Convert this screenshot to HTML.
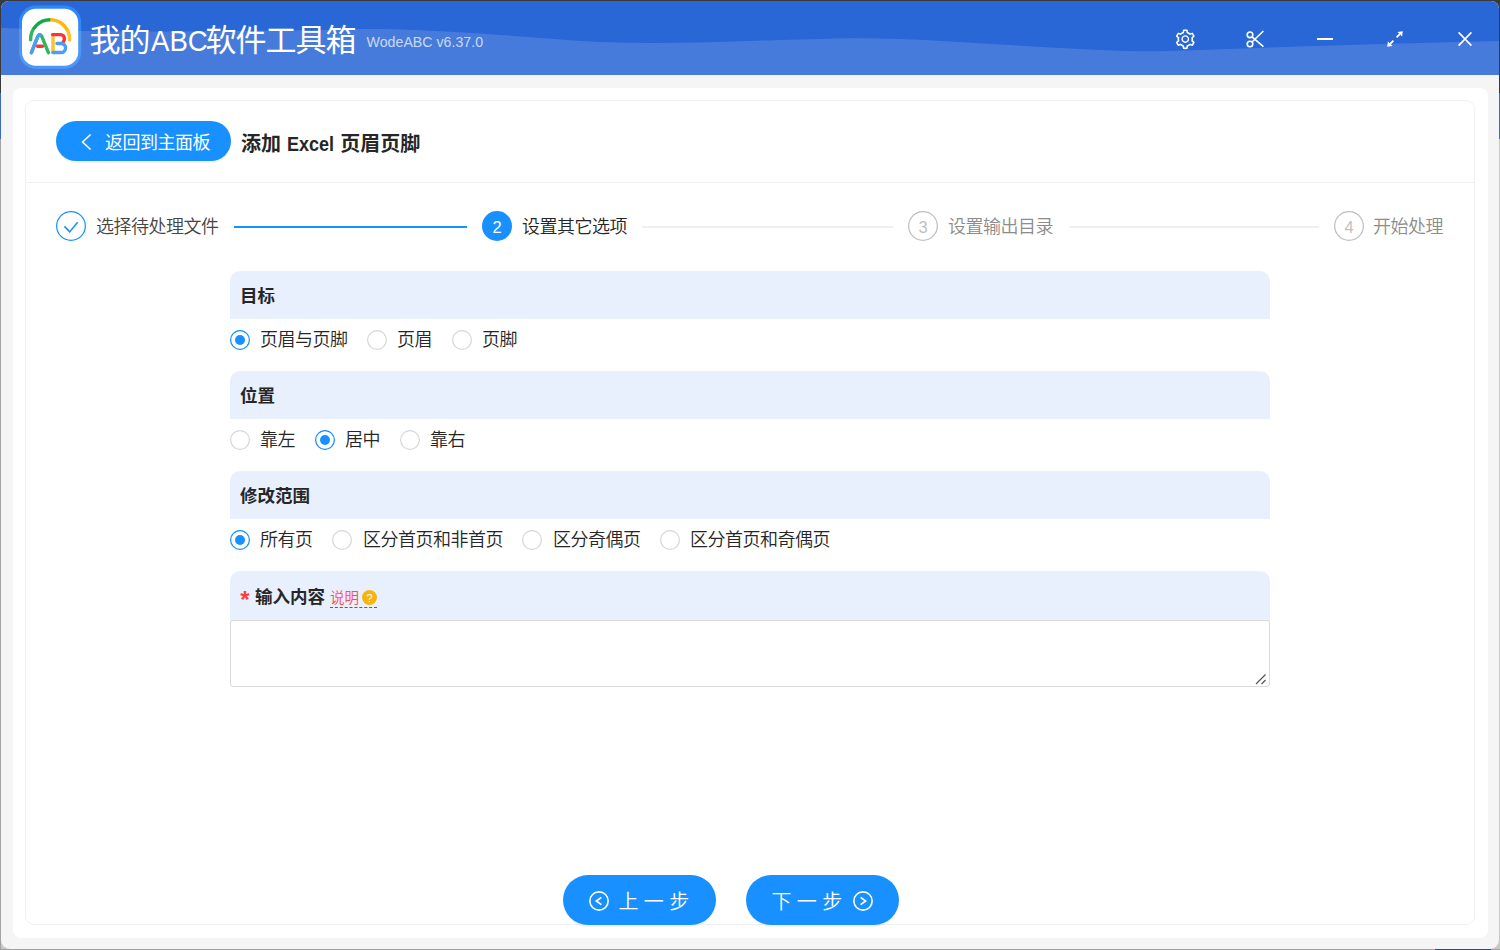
<!DOCTYPE html>
<html lang="zh-CN">
<head>
<meta charset="utf-8">
<title>我的ABC软件工具箱</title>
<style>
*{box-sizing:border-box;margin:0;padding:0}
html,body{width:1500px;height:950px;overflow:hidden}
html{background:#3b3b3b}
body{background:linear-gradient(to bottom,#3a3a3a 0,#3a3a3a 93px,#3d68c4 93px,#3d68c4 139px,#c8c8c8 139px,#c8c8c8 949px,#a0a0a0 949px)}
body{font-family:"Liberation Sans","Noto Sans CJK SC",sans-serif;color:#262626;position:relative;font-weight:350}
.abs{position:absolute}
#win{position:absolute;left:1px;top:1px;width:1498px;height:948px;background:#f5f5f5;border-radius:8px 8px 9px 9px;overflow:hidden}
/* everything inside #stage uses screenshot coordinates */
#stage{position:absolute;left:-1px;top:-1px;width:1500px;height:950px}
#hdr{position:absolute;left:0;top:0;width:1500px;height:74.8px;background:#2966d6}
#wave{position:absolute;left:0;top:0;width:1500px;height:75px}
#apptitle{position:absolute;left:89.5px;top:18.8px;height:44px;line-height:44px;font-size:31px;letter-spacing:-1px;font-weight:400;color:#fff;white-space:nowrap}
#ver{position:absolute;left:366.6px;top:31.6px;height:20px;line-height:20px;font-size:14.2px;color:rgba(255,255,255,.72);white-space:nowrap}
#panel{position:absolute;left:13px;top:88px;width:1475px;height:850px;background:#fff;border-radius:8px}
#card{position:absolute;left:25px;top:100px;width:1450px;height:825px;border:1px solid #f0f0f0;border-radius:9px;background:#fff}
#divider{position:absolute;left:26px;top:182px;width:1448px;height:1px;background:#f0f0f0}
#back{position:absolute;left:56px;top:121px;width:175px;height:40px;border-radius:20px;background:#1890ff;box-shadow:0 2px 0 rgba(0,0,0,.045);color:#fff;font-size:18px;font-weight:400;letter-spacing:-.5px;line-height:44.5px;white-space:nowrap}
#back span{position:absolute;left:49px;top:0}
#ptitle{position:absolute;left:241px;top:124.2px;height:40px;line-height:40px;font-size:20px;font-weight:bold;color:#262626;white-space:nowrap}
.step-ic{position:absolute;top:211px;width:30px;height:30px;border-radius:50%;text-align:center;font-size:16.5px;line-height:33.4px}
.step-ic svg.ring{position:absolute;left:0;top:0}
.step-t{position:absolute;top:212px;height:30px;line-height:30px;font-size:18px;letter-spacing:-.5px;white-space:nowrap}
.step-l{position:absolute;top:226px;height:2px}
.sec{position:absolute;left:230px;width:1040px;height:48px;background:#e8effd;border-radius:10px 10px 0 0}
.sec b{position:absolute;left:10px;top:0;height:48px;line-height:50px;font-size:17.5px;font-weight:bold;color:#262626;white-space:nowrap}
.rl{position:absolute;height:28px;line-height:28px;font-size:18px;letter-spacing:-.5px;color:#262626;white-space:nowrap}
#ta{position:absolute;left:230px;top:620px;width:1040px;height:67px;border:1px solid #d9d9d9;border-radius:3px;background:#fff;resize:none;outline:none;overflow:hidden;display:block;font:inherit;padding:5px 14px}
.bbtn{position:absolute;top:875px;width:153px;height:50px;border-radius:25px;background:#1890ff;box-shadow:0 2px 0 rgba(0,0,0,.045);color:#fff;font-size:20px;line-height:50px;white-space:nowrap}
</style>
</head>
<body>
<div class="abs" style="left:1435px;top:949px;width:56px;height:1px;background:#1f4e96"></div>
<div class="abs" style="left:0;top:139px;width:1px;height:811px;background:#a3a3a3"></div>
<div id="win"><div id="stage">

<!-- ===== title bar ===== -->
<div id="hdr"></div>
<svg class="abs" style="left:15px;top:2px" width="70" height="70" viewBox="15 2 70 70">
<rect x="19" y="5.6" width="62.2" height="63.2" rx="16.6" fill="#2f88f8"/>
<rect x="22" y="8.8" width="56.2" height="57" rx="13.8" fill="#fff"/>
<g fill="none" stroke-width="3.45" stroke-linecap="round" stroke-linejoin="round">
<path d="M30.6 39.8 A19.5 19.5 0 0 1 50.2 19.8" stroke="#0cab47"/>
<path d="M50.2 19.8 A19.5 19.5 0 0 1 69.6 39.8" stroke="#fdb80d" stroke-linecap="butt"/>
<path d="M69.6 39.8 v.1" stroke="#fdb80d"/>
<path d="M31.4 52.6 L37.2 37.8 Q39.8 31.6 42.4 37.8 L48.4 52.6" stroke="#0cab47"/>
<path d="M31.4 52.6 L37.2 37.8 Q38.4 34.9 39.6 34.7" stroke="#2f8df7"/>
<path d="M37.6 46.2 H42.4" stroke="#fb1212"/>
<path d="M53 35.6 V51.6" stroke="#fdb80d" stroke-linecap="butt"/>
<path d="M52.6 34.6 H60.6 A3.9 3.9 0 0 1 64.4 38.4 Q64.4 40.4 63.2 41.8" stroke="#fb1212"/>
<path d="M57 43.4 H61 A4.55 4.55 0 0 1 61 52.5 H52.8" stroke="#2f8df7"/>
</g></svg>

<div id="apptitle">我的<span style="display:inline-block;font-size:30px;letter-spacing:0;transform:scaleX(.92);transform-origin:0 50%;margin-left:1.5px;margin-right:-7.3px">ABC</span>软件工具箱</div>
<div id="ver">WodeABC v6.37.0</div>
<svg class="abs" style="left:1173.7px;top:27.7px" width="22.6" height="22.6" viewBox="0 0 1024 1024" fill="#fff"><path d="M924.8 625.7l-65.5-56c3.1-19 4.7-38.400 4.700-57.800s-1.600-38.800-4.700-57.800l65.500-56a32.030 32.030 0 0 0 9.300-35.200l-.9-2.600a442.400 442.400 0 0 0-79.700-137.900l-1.800-2.100a32.120 32.120 0 0 0-35.100-9.500l-81.300 28.900c-30-24.600-63.500-44-99.700-57.600l-15.700-85a32.050 32.050 0 0 0-25.800-25.700l-2.700-.5c-52.100-9.400-106.900-9.400-159 0l-2.700.5a32.050 32.050 0 0 0-25.800 25.700l-15.800 85.400a351.860 351.860 0 0 0-99 57.400l-81.900-29.100a32 32 0 0 0-35.100 9.500l-1.800 2.100a446.020 446.020 0 0 0-79.700 137.900l-.9 2.600c-4.500 12.500-.8 26.500 9.300 35.200l66.300 56.600c-3.100 18.800-4.600 38-4.600 57.100 0 19.200 1.500 38.400 4.600 57.100L99 625.500a32.030 32.030 0 0 0-9.300 35.200l.9 2.600c18.100 50.400 44.900 96.900 79.700 137.900l1.800 2.100a32.120 32.120 0 0 0 35.100 9.500l81.900-29.100c29.800 24.500 63.100 43.900 99 57.400l15.800 85.400a32.050 32.050 0 0 0 25.800 25.700l2.700.5a449.400 449.400 0 0 0 159 0l2.700-.5a32.050 32.050 0 0 0 25.800-25.700l15.700-85a350 350 0 0 0 99.700-57.600l81.300 28.900a32 32 0 0 0 35.100-9.500l1.800-2.100c34.800-41.100 61.600-87.500 79.700-137.900l.9-2.600c4.500-12.300.8-26.300-9.300-35zM788.300 465.900c2.500 15.100 3.800 30.600 3.800 46.100s-1.300 31-3.800 46.100l-6.600 40.100 74.700 63.900a370.030 370.030 0 0 1-42.600 73.600L721 702.800l-31.400 25.800c-23.900 19.600-50.500 35-79.300 45.800l-38.100 14.300-17.900 97a377.500 377.500 0 0 1-85 0l-17.900-97.200-37.800-14.500c-28.500-10.800-55-26.200-78.700-45.700l-31.400-25.900-93.400 33.200c-17-22.900-31.200-47.600-42.600-73.600l75.500-64.500-6.500-40c-2.400-14.900-3.700-30.300-3.700-45.500 0-15.300 1.200-30.600 3.700-45.500l6.500-40-75.500-64.500c11.300-26.100 25.600-50.700 42.600-73.600l93.400 33.200 31.400-25.900c23.700-19.500 50.200-34.900 78.700-45.700l37.900-14.300 17.900-97.200c28.100-3.200 56.800-3.200 85 0l17.900 97 38.100 14.300c28.700 10.800 55.400 26.200 79.300 45.800l31.400 25.800 92.800-32.900c17 22.900 31.200 47.600 42.600 73.600L781.800 426l6.500 39.900zM512 326c-97.200 0-176 78.800-176 176s78.800 176 176 176 176-78.800 176-176-78.800-176-176-176zm79.200 255.200A111.600 111.600 0 0 1 512 614c-29.900 0-58-11.700-79.200-32.800A111.600 111.600 0 0 1 400 502c0-29.900 11.700-58 32.800-79.200C454 401.600 482.100 390 512 390c29.900 0 58 11.600 79.200 32.800A111.600 111.600 0 0 1 624 502c0 29.900-11.700 58-32.800 79.200z"/></svg>
<svg class="abs" style="left:1244px;top:28px" width="22" height="22" viewBox="0 0 22 22" fill="none" stroke="#fff" stroke-width="1.6"><circle cx="6" cy="6.8" r="2.8"/><circle cx="6" cy="16" r="2.8"/><path d="M8 8.8 L19.4 18.6 M8 14 L19.4 3"/></svg>
<div class="abs" style="left:1317px;top:38px;width:16px;height:2px;background:#fff"></div>
<svg class="abs" style="left:1385px;top:29px" width="20" height="20" viewBox="0 0 20 20"><path d="M5.2 14.8 L8.4 11.6 M11.6 8.4 L14.8 5.2" stroke="#fff" stroke-width="1.9" fill="none"/><path d="M2.2 17.8 L2.9 12.5 L7.5 17.1 Z M17.8 2.2 L17.1 7.5 L12.5 2.9 Z" fill="#fff"/></svg>
<svg class="abs" style="left:1456px;top:30px" width="18" height="18" viewBox="0 0 18 18"><path d="M2.6 2.4 L15.4 15.6 M15.4 2.4 L2.6 15.6" stroke="#fff" stroke-width="1.6" fill="none"/></svg>

<svg id="wave" viewBox="0 0 1500 75"><path fill="#fff" fill-opacity=".14" d="M0 27.6 C6.7 27.90 13.3 28.21 20 28.5 C30.0 28.94 40.0 29.43 50 29.8 C61.7 30.23 73.3 30.70 85 30.9 C106.7 31.27 128.3 31.42 150 31.5 C166.7 31.56 183.3 31.43 200 31.3 C233.3 31.03 266.7 30.72 300 30.3 C316.7 30.09 333.3 29.64 350 29.4 C361.7 29.24 373.3 28.97 385 29.1 C396.7 29.23 408.3 29.72 420 30.2 C433.3 30.75 446.7 31.40 460 32.2 C473.3 33.00 486.7 34.03 500 35 C513.3 35.97 526.7 37.01 540 38 C550.0 38.74 560.0 39.53 570 40.2 C580.0 40.87 590.0 41.65 600 42 C616.7 42.58 633.3 42.92 650 43 C666.7 43.08 683.3 42.83 700 42.5 C716.7 42.17 733.3 41.50 750 41 C766.7 40.50 783.3 39.97 800 39.5 C816.7 39.03 833.3 38.28 850 38.2 C866.7 38.12 883.3 38.45 900 39 C916.7 39.55 933.3 40.58 950 41.5 C966.7 42.42 983.3 43.50 1000 44.5 C1016.7 45.50 1033.3 46.58 1050 47.5 C1066.7 48.42 1083.3 49.37 1100 50 C1116.7 50.63 1133.3 51.30 1150 51.3 C1166.7 51.30 1183.3 50.53 1200 50 C1233.3 48.93 1266.7 47.57 1300 46.5 C1333.3 45.43 1366.7 44.52 1400 43.6 C1433.3 42.68 1466.7 41.87 1500 41 L1500 75 L0 75 Z"/></svg>

<!-- ===== content ===== -->
<div id="panel"></div>
<div id="card"></div>
<div id="divider"></div>

<div id="back"><svg class="abs" style="left:24px;top:12px" width="12" height="18" viewBox="0 0 12 18"><path d="M10.6 1.5 L2.6 9 L10.6 16.5" fill="none" stroke="#fff" stroke-width="1.6"/></svg><span>返回到主面板</span></div>
<div id="ptitle">添加 <span style="display:inline-block;transform:scaleX(.9);transform-origin:0 50%;margin-left:.6px;margin-right:-4.8px">Excel</span> 页眉页脚</div>

<!-- steps -->
<div class="step-ic" style="left:56px"><svg class="ring" width="30" height="30" viewBox="0 0 30 30"><circle cx="15" cy="15" r="14.35" fill="none" stroke="#1890ff" stroke-width="1.25"/></svg><svg class="abs" style="left:7px;top:8px" width="17" height="15" viewBox="0 0 17 15"><path d="M1.4 7.4 L6.7 12.9 L14.6 3.3" fill="none" stroke="#1890ff" stroke-width="1.6"/></svg></div>
<div class="step-t" style="left:96px;color:#454545">选择待处理文件</div>
<div class="step-l" style="left:234px;width:233px;background:#1890ff"></div>
<div class="step-ic" style="left:482px;background:#1890ff;color:#fff">2</div>
<div class="step-t" style="left:522px;color:#262626">设置其它选项</div>
<div class="step-l" style="left:642px;width:251px;background:#f0f0f0"></div>
<div class="step-ic" style="left:908px;color:#bfbfbf"><svg class="ring" width="30" height="30" viewBox="0 0 30 30"><circle cx="15" cy="15" r="14.35" fill="none" stroke="#bfbfbf" stroke-width="1.25"/></svg>3</div>
<div class="step-t" style="left:948px;color:#8c8c8c">设置输出目录</div>
<div class="step-l" style="left:1069px;width:250px;background:#f0f0f0"></div>
<div class="step-ic" style="left:1334px;color:#bfbfbf"><svg class="ring" width="30" height="30" viewBox="0 0 30 30"><circle cx="15" cy="15" r="14.35" fill="none" stroke="#bfbfbf" stroke-width="1.25"/></svg>4</div>
<div class="step-t" style="left:1373px;color:#8c8c8c">开始处理</div>


<!-- form -->
<div class="sec" style="top:271px"><b>目标</b></div>
<svg class="abs" style="left:230px;top:330px" width="20" height="20" viewBox="0 0 20 20"><circle cx="10" cy="10" r="9.38" fill="#fff" stroke="#1890ff" stroke-width="1.25"/><circle cx="10" cy="10" r="5" fill="#1890ff"/></svg><div class="rl" style="left:260px;top:326px">页眉与页脚</div>
<svg class="abs" style="left:367px;top:330px" width="20" height="20" viewBox="0 0 20 20"><circle cx="10" cy="10" r="9.38" fill="#fff" stroke="#d8d8d8" stroke-width="1.25"/></svg><div class="rl" style="left:397px;top:326px">页眉</div>
<svg class="abs" style="left:452px;top:330px" width="20" height="20" viewBox="0 0 20 20"><circle cx="10" cy="10" r="9.38" fill="#fff" stroke="#d8d8d8" stroke-width="1.25"/></svg><div class="rl" style="left:482px;top:326px">页脚</div>

<div class="sec" style="top:371px"><b>位置</b></div>
<svg class="abs" style="left:230px;top:430px" width="20" height="20" viewBox="0 0 20 20"><circle cx="10" cy="10" r="9.38" fill="#fff" stroke="#d8d8d8" stroke-width="1.25"/></svg><div class="rl" style="left:260px;top:426px">靠左</div>
<svg class="abs" style="left:315px;top:430px" width="20" height="20" viewBox="0 0 20 20"><circle cx="10" cy="10" r="9.38" fill="#fff" stroke="#1890ff" stroke-width="1.25"/><circle cx="10" cy="10" r="5" fill="#1890ff"/></svg><div class="rl" style="left:345px;top:426px">居中</div>
<svg class="abs" style="left:400px;top:430px" width="20" height="20" viewBox="0 0 20 20"><circle cx="10" cy="10" r="9.38" fill="#fff" stroke="#d8d8d8" stroke-width="1.25"/></svg><div class="rl" style="left:430px;top:426px">靠右</div>

<div class="sec" style="top:471px"><b>修改范围</b></div>
<svg class="abs" style="left:230px;top:530px" width="20" height="20" viewBox="0 0 20 20"><circle cx="10" cy="10" r="9.38" fill="#fff" stroke="#1890ff" stroke-width="1.25"/><circle cx="10" cy="10" r="5" fill="#1890ff"/></svg><div class="rl" style="left:260px;top:526px">所有页</div>
<svg class="abs" style="left:332px;top:530px" width="20" height="20" viewBox="0 0 20 20"><circle cx="10" cy="10" r="9.38" fill="#fff" stroke="#d8d8d8" stroke-width="1.25"/></svg><div class="rl" style="left:363px;top:526px">区分首页和非首页</div>
<svg class="abs" style="left:522px;top:530px" width="20" height="20" viewBox="0 0 20 20"><circle cx="10" cy="10" r="9.38" fill="#fff" stroke="#d8d8d8" stroke-width="1.25"/></svg><div class="rl" style="left:553px;top:526px">区分奇偶页</div>
<svg class="abs" style="left:660px;top:530px" width="20" height="20" viewBox="0 0 20 20"><circle cx="10" cy="10" r="9.38" fill="#fff" stroke="#d8d8d8" stroke-width="1.25"/></svg><div class="rl" style="left:690px;top:526px">区分首页和奇偶页</div>

<div class="sec" style="top:571px;height:50px"><span class="abs" style="left:10.3px;top:14px;line-height:30px;height:30px;font-size:24px;font-weight:bold;color:#ff3b3d">*</span><b style="left:25px;height:50px;line-height:52px">输入内容</b><span class="abs" style="left:100px;top:17px;height:20px;line-height:20px;font-size:14.5px;letter-spacing:-.1px;color:#ff4d4f;border-bottom:1px dashed #ff1a1a;white-space:nowrap;width:47px">说明</span><span class="abs" style="left:132px;top:19px;width:15px;height:15px;border-radius:50%;background:#f5b40f;color:#fff;font-size:11px;line-height:16.4px;text-align:center">?</span></div>
<textarea id="ta" rows="2" spellcheck="false"></textarea><svg class="abs" style="left:1255px;top:672.8px" width="12" height="12" viewBox="0 0 12 12"><path d="M1 11 L10.5 1.5 M6.5 11 L10.5 7" stroke="#555" stroke-width="1.2" fill="none"/></svg>


<!-- bottom buttons -->
<div class="bbtn" style="left:563px"><svg class="abs" style="left:24.8px;top:15px" width="22" height="22" viewBox="0 0 22 22"><circle cx="11" cy="11" r="9.15" fill="none" stroke="#fff" stroke-width="1.6"/><path d="M13.4 7.4 L8.4 11 L13.4 14.6" fill="none" stroke="#fff" stroke-width="1.7"/></svg><span class="abs" style="left:55.4px;top:1.8px;letter-spacing:5.4px;font-weight:350">上一步</span></div>
<div class="bbtn" style="left:746px"><span class="abs" style="left:25.4px;top:1.8px;letter-spacing:5.4px;font-weight:350">下一步</span><svg class="abs" style="left:106px;top:15px" width="22" height="22" viewBox="0 0 22 22"><circle cx="11" cy="11" r="9.15" fill="none" stroke="#fff" stroke-width="1.6"/><path d="M8.6 7.4 L13.6 11 L8.6 14.6" fill="none" stroke="#fff" stroke-width="1.7"/></svg></div>

</div></div>
</body>
</html>
